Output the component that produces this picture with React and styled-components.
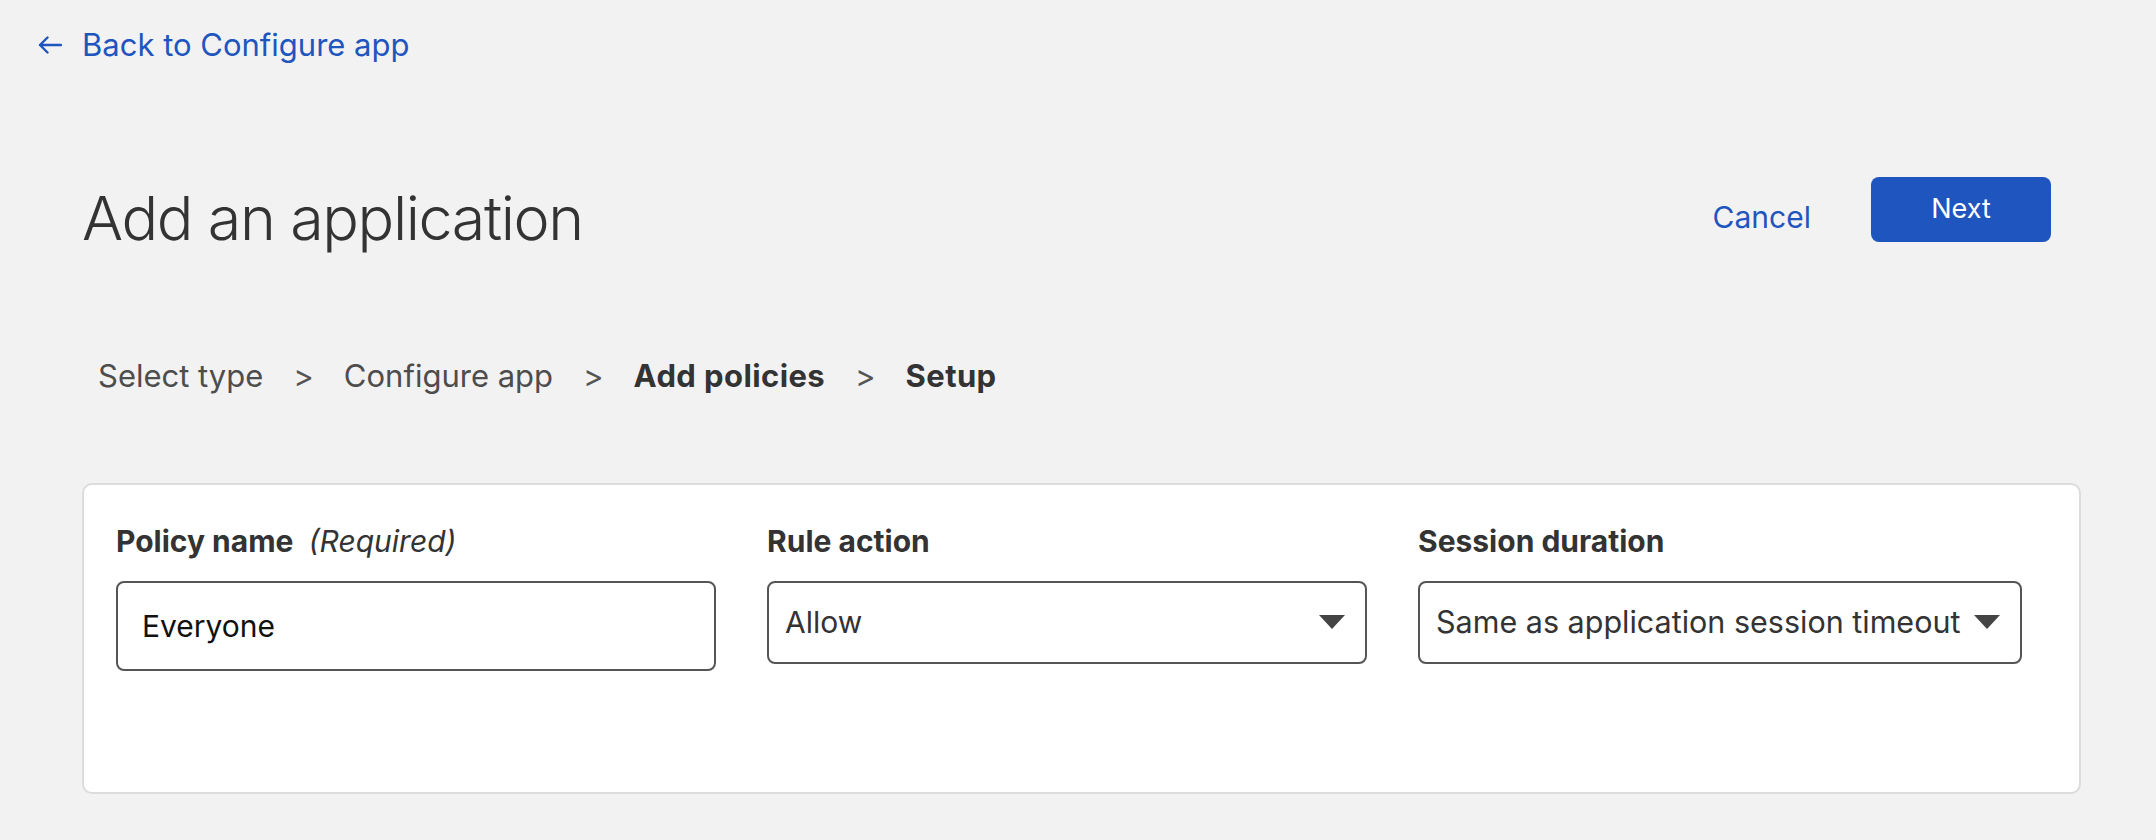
import React from 'react';
import styled, { createGlobalStyle } from 'styled-components';

const GlobalStyle = createGlobalStyle`
  html, body {
    margin: 0;
    padding: 0;
    background: #f2f2f2;
  }
  body {
    font-family: 'Inter', 'Liberation Sans', sans-serif;
    color: #333;
  }
`;

const ArrowLeft = () => (
  <svg width="24" height="18" viewBox="0 0 24 18" fill="none">
    <path
      d="M23 9H2M9.5 1.5L2 9l7.5 7.5"
      stroke="currentColor"
      strokeWidth="2.4"
      strokeLinecap="round"
      strokeLinejoin="round"
    />
  </svg>
);

const Caret = () => (
  <svg width="26" height="14" viewBox="0 0 26 14">
    <path d="M0 0h26L13 14z" fill="#444" />
  </svg>
);

const steps = [
  { label: 'Select type', done: false },
  { label: 'Configure app', done: false },
  { label: 'Add policies', done: true },
  { label: 'Setup', done: true },
];

const App = () => (
  <Page>
    <GlobalStyle />
    <BackLink>
      <ArrowLeft />
      <span>Back to Configure app</span>
    </BackLink>

    <Content>
      <Header>
        <Title>Add an application</Title>
        <Actions>
          <CancelLink>Cancel</CancelLink>
          <PrimaryButton>Next</PrimaryButton>
        </Actions>
      </Header>

      <Breadcrumb>
        {steps.map((step, i) => (
          <React.Fragment key={step.label}>
            {i > 0 && <Separator>&gt;</Separator>}
            <Step $strong={step.done}>{step.label}</Step>
          </React.Fragment>
        ))}
      </Breadcrumb>

      <Card>
        <Field>
          <Label>
            Policy name <Hint>(Required)</Hint>
          </Label>
          <TextBox>Everyone</TextBox>
        </Field>
        <Field>
          <Label>Rule action</Label>
          <SelectBox>
            <span>Allow</span>
            <Caret />
          </SelectBox>
        </Field>
        <Field>
          <Label>Session duration</Label>
          <SelectBox $wide>
            <span>Same as application session timeout</span>
            <Caret />
          </SelectBox>
        </Field>
      </Card>
    </Content>
  </Page>
);

const Page = styled.div`
  min-height: 840px;
`;

const BackLink = styled.a`
  display: flex;
  align-items: center;
  gap: 20px;
  padding: 25px 0 0 38px;
  height: 40px;
  font-size: 31px;
  line-height: 40px;
  color: #1f55bf;
  cursor: pointer;
`;

const Content = styled.div`
  padding: 0 75px 0 82px;
`;

const Header = styled.div`
  display: flex;
  justify-content: space-between;
  align-items: flex-start;
  margin-top: 112px;
  padding-right: 30px;
`;

const Title = styled.h1`
  margin: 4px 0 0;
  font-size: 61px;
  line-height: 74px;
  font-weight: 300;
  letter-spacing: -1.4px;
  color: #333;
`;

const Actions = styled.div`
  display: flex;
  align-items: flex-start;
  gap: 60px;
`;

const CancelLink = styled.a`
  margin-top: 20px;
  font-size: 30px;
  line-height: 40px;
  color: #1f55bf;
  cursor: pointer;
`;

const PrimaryButton = styled.button`
  width: 180px;
  height: 65px;
  padding: 0 0 2px;
  border: none;
  border-radius: 8px;
  background: #1f55bf;
  color: #fff;
  font-family: inherit;
  font-size: 27px;
  cursor: pointer;
`;

const Breadcrumb = styled.nav`
  display: flex;
  align-items: center;
  gap: 30px;
  margin-top: 101px;
  padding-left: 16px;
  font-size: 31px;
  line-height: 40px;
`;

const Step = styled.span`
  color: ${(p) => (p.$strong ? '#333' : '#4d4d4d')};
  font-weight: ${(p) => (p.$strong ? 700 : 400)};
  letter-spacing: ${(p) => (p.$strong ? '0.4px' : '0')};
`;

const Separator = styled.span`
  color: #555;
`;

const Card = styled.section`
  display: grid;
  grid-template-columns: 600px 600px 604px;
  column-gap: 51px;
  align-items: start;
  margin-top: 87px;
  padding: 36px 0 121px 32px;
  background: #fff;
  border: 2px solid #dcdcdc;
  border-radius: 10px;
`;

const Field = styled.div`
  display: flex;
  flex-direction: column;
  gap: 20px;
`;

const Label = styled.label`
  font-size: 30px;
  line-height: 40px;
  font-weight: 700;
  color: #333;
`;

const Hint = styled.em`
  margin-left: 8px;
  font-weight: 400;
`;

const TextBox = styled.div`
  box-sizing: border-box;
  height: 90px;
  display: flex;
  align-items: center;
  padding: 0 24px;
  border: 2px solid #555;
  border-radius: 8px;
  font-size: 30px;
  color: #111;
`;

const SelectBox = styled.div`
  box-sizing: border-box;
  height: 83px;
  display: flex;
  align-items: center;
  justify-content: space-between;
  gap: 12px;
  padding: 0 20px 2px 16px;
  border: 2px solid #555;
  border-radius: 8px;
  font-size: ${(p) => (p.$wide ? '30.5px' : '30px')};
  color: #333;
  white-space: nowrap;
`;

export default App;
